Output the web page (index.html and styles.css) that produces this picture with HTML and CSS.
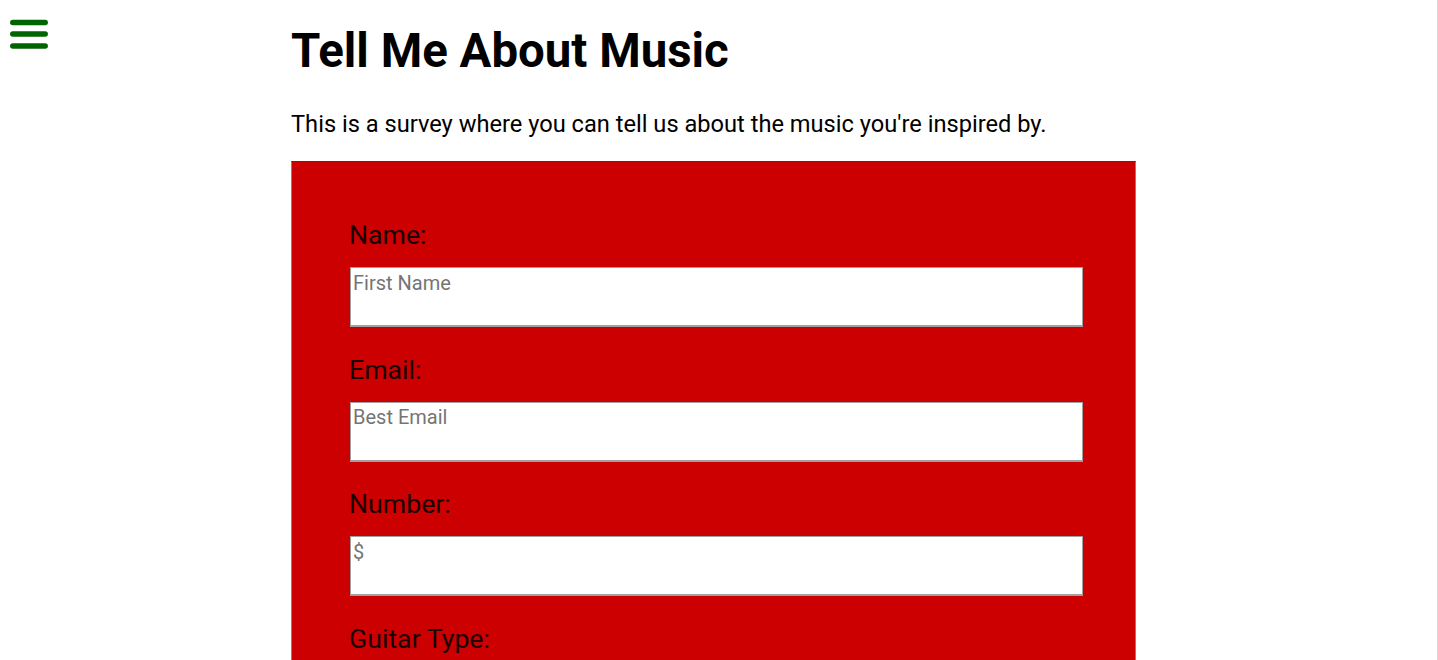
FILE: index.html
```html
<!DOCTYPE html>
<html lang="en">
<head>
<meta charset="utf-8">
<title>Tell Me About Music</title>
<link rel="stylesheet" href="styles.css">
</head>
<body>
<div class="page">
  <button class="menu" aria-label="Menu">
    <svg width="40" height="34" viewBox="0 0 40 34">
      <g stroke="#006400" stroke-width="5.5" stroke-linecap="round">
        <line x1="2.8" y1="4.5" x2="35.2" y2="4.5"/>
        <line x1="2.8" y1="16" x2="35.2" y2="16"/>
        <line x1="2.8" y1="28" x2="35.2" y2="28"/>
      </g>
    </svg>
  </button>
  <main class="main">
    <h1 class="title">Tell Me About Music</h1>
    <p class="intro">This is a survey where you can tell us about the music you're inspired by.</p>
    <form class="survey">
      <div class="field">
        <label class="label" for="name">Name:</label>
        <input class="input" id="name" type="text" placeholder="First Name">
      </div>
      <div class="field">
        <label class="label" for="email">Email:</label>
        <input class="input" id="email" type="email" placeholder="Best Email">
      </div>
      <div class="field">
        <label class="label" for="number">Number:</label>
        <input class="input" id="number" type="text" placeholder="$">
      </div>
      <div class="field">
        <label class="label" for="guitar">Guitar Type:</label>
        <input class="input" id="guitar" type="text">
      </div>
    </form>
  </main>
</div>
</body>
</html>
```

FILE: styles.css
```css
* { box-sizing: border-box; }
html, body { margin: 0; padding: 0; }
body {
  font-family: Roboto, "Liberation Sans", sans-serif;
  background: #fff;
  color: #000;
  overflow: hidden;
}
.page {
  position: relative;
  min-height: 660px;
  border-right: 1px solid #d8d8d8;
}
.menu {
  position: absolute;
  left: 10px;
  top: 18px;
  padding: 0;
  margin: 0;
  border: 0;
  background: none;
  line-height: 0;
}
.main {
  margin-left: 291px;
  width: 845px;
  padding-top: 23px;
}
.title {
  margin: 0;
  font-size: 47.4px;
  font-weight: 700;
  line-height: 56px;
}
.intro {
  margin: 31px 0 0;
  font-size: 23.65px;
  line-height: 28px;
}
.survey {
  margin-top: 23px;
  background: #cc0000;
  border: 1px solid #d9605e;
  border-top-color: #b80000;
  padding: 58px 52px 40px 58px;
}
.field { margin-bottom: 27.5px; }
.label {
  display: block;
  font-size: 26.7px;
  line-height: 31px;
  color: #1a0000;
  margin-bottom: 16px;
  margin-left: -1px;
}
.input {
  display: block;
  width: 733px;
  height: 60px;
  margin: 0;
  border: 1px solid #a0a0a0;
  border-bottom-width: 2px;
  background: #fff;
  font-family: Roboto, "Liberation Sans", sans-serif;
  font-size: 20px;
  padding: 4px 2px 32px;
  color: #000;
}
.input::placeholder { color: #757575; }
```
